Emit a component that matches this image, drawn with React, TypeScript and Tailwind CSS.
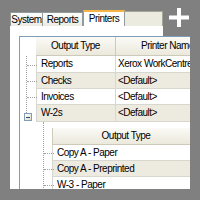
import React from 'react';

type Row = { type: string; printer: string; alt?: boolean };

const rows: Row[] = [
  { type: 'Reports', printer: 'Xerox WorkCentre 7345' },
  { type: 'Checks', printer: '<Default>', alt: true },
  { type: 'Invoices', printer: '<Default>' },
];

const subRows: Row[] = [
  { type: 'Copy A - Paper', printer: '' },
  { type: 'Copy A - Preprinted', printer: '', alt: true },
  { type: 'W-3 - Paper', printer: '' },
];

const Tab: React.FC<{ label: string; className: string }> = ({ label, className }) => (
  <div
    className={`h-[14px] flex items-center justify-center border border-b-0 border-[#919b9c] bg-gradient-to-b from-[#fdfdfb] to-[#ecebe4] ${className}`}
  >
    {label}
  </div>
);

const HeaderCell: React.FC<{ label: string; className: string }> = ({ label, className }) => (
  <div
    className={`shrink-0 flex items-center justify-center whitespace-nowrap border-r border-b border-[#cdcabb] bg-gradient-to-b from-[#fbfaf6] to-[#ebe9dc] ${className}`}
  >
    {label}
  </div>
);

const TreeTick: React.FC<{ h: string }> = ({ h }) => (
  <div className={`relative ${h}`}>
    <div className="absolute left-0 top-1/2 w-[10px] border-t border-dotted border-[#a0a0a0]" />
  </div>
);

export default function App() {
  return (
    <div className="w-[200px] h-[200px] bg-[#808080] relative overflow-hidden font-['Liberation_Sans',Arial,sans-serif] text-[10px] leading-none tracking-[-0.5px] text-black">
      <div className="ml-[10px] mt-[10px] w-[180px] h-[179px] overflow-hidden flex flex-col">
        {/* tab strip */}
        <div className="flex items-end h-[16px] shrink-0">
          <Tab label="System" className="w-[33px]" />
          <Tab label="Reports" className="w-[40px] border-l-0" />
          <div className="w-[42px] h-[16px] flex items-center justify-center bg-white border-t-2 border-[#f5b545] border-x border-x-[#919b9c]">
            Printers
          </div>
          <div className="w-[38px] h-[15px] border-t border-r border-[#a7a69b] bg-[#ecebe0]" />
        </div>

        {/* tab page */}
        <div className="w-[153px] flex-1 bg-white pl-[9px] pt-[10px]">
          <div className="w-[240px] h-[200px] border border-[#7f9db9] bg-white flex">
            {/* row header column */}
            <div className="w-[16px] shrink-0 flex flex-col">
              <div className="h-[19px]" />
              <div className="relative ml-[6px] border-l border-dotted border-[#a0a0a0] h-[57px] flex flex-col">
                <TreeTick h="h-[17px]" />
                <TreeTick h="h-[16px]" />
                <TreeTick h="h-[16px]" />
                <div className="h-[8px]" />
              </div>
              <div className="ml-[4px] w-[8px] h-[8px] border border-[#7f9db9] bg-gradient-to-br from-white to-[#dcd9c8] flex items-center justify-center">
                <div className="w-[4px] h-px bg-[#2a4a7a]" />
              </div>
            </div>

            <div className="flex flex-col">
              <div className="flex h-[19px]">
                <HeaderCell label="Output Type" className="w-[80px]" />
                <HeaderCell label="Printer Name" className="w-[104px]" />
              </div>
              {rows.map((r, i) => (
                <div
                  key={r.type}
                  className={`flex ${i === 0 ? 'h-[17px]' : 'h-[16px]'} ${r.alt ? 'bg-[#edebe0]' : 'bg-white'}`}
                >
                  <div className="w-[80px] shrink-0 flex items-center pl-[4px] border-l border-r border-b border-[#d8d7cf]">
                    {r.type}
                  </div>
                  <div className="w-[104px] shrink-0 flex items-center pl-[2px] border-b border-r border-[#d8d7cf] whitespace-nowrap overflow-hidden">
                    {r.printer}
                  </div>
                </div>
              ))}
              <div className="flex h-[17px] bg-[#edebe0]">
                <div className="w-[80px] shrink-0 flex items-center pl-[4px] border-l border-r border-b border-[#d8d7cf]">
                  W-2s
                </div>
                <div className="w-[104px] shrink-0 flex items-center pl-[2px] border-b border-r border-[#d8d7cf]">
                  &lt;Default&gt;
                </div>
              </div>

              {/* child band */}
              <div className="flex">
                <div className="w-[16px] shrink-0 flex flex-col">
                  <div className="ml-[7px] border-l border-dotted border-[#a0a0a0] h-[80px] flex flex-col pt-[23px]">
                    <TreeTick h="h-[16px]" />
                    <TreeTick h="h-[16px]" />
                    <TreeTick h="h-[16px]" />
                  </div>
                </div>
                <div className="flex flex-col pt-[6px]">
                  <HeaderCell label="Output Type" className="w-[148px] h-[17px] border-l" />
                  {subRows.map((r) => (
                    <div
                      key={r.type}
                      className={`w-[148px] h-[16px] flex items-center pl-[4px] border-l border-r border-b border-[#d8d7cf] whitespace-nowrap ${r.alt ? 'bg-[#edebe0]' : 'bg-white'}`}
                    >
                      {r.type}
                    </div>
                  ))}
                </div>
              </div>
            </div>
          </div>
        </div>
      </div>

      {/* add button */}
      <svg className="absolute left-[169px] top-[8px]" width="20" height="19" viewBox="0 0 20 19">
        <rect x="8" y="0" width="4" height="19" fill="#ffffff" />
        <rect x="0" y="7.5" width="20" height="4" fill="#ffffff" />
      </svg>
    </div>
  );
}
